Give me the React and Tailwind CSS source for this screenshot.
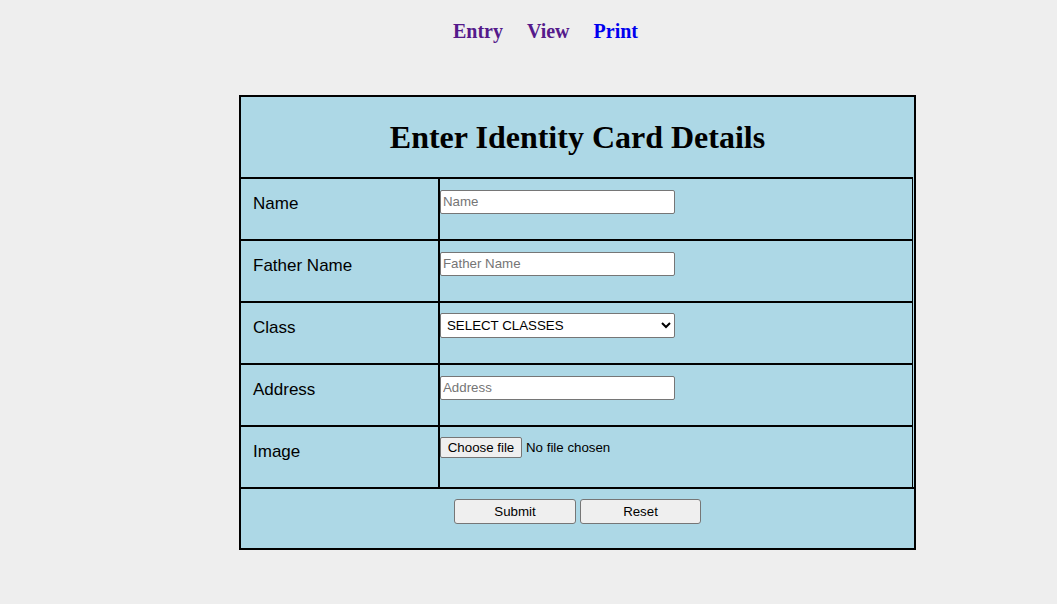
import { useState } from "react";

const ROWS = [
  { label: "Name", kind: "text", ph: "Name" },
  { label: "Father Name", kind: "text", ph: "Father Name" },
  { label: "Class", kind: "select" },
  { label: "Address", kind: "text", ph: "Address" },
  { label: "Image", kind: "file" },
];

function Field({ row }) {
  if (row.kind === "select") {
    return (
      <select className="h-[25px] w-[235px] rounded-[2px] border border-[#767676] bg-white pl-[2px] text-[13.3px] text-black">
        <option>SELECT CLASSES</option>
        <option>I</option>
        <option>II</option>
        <option>III</option>
      </select>
    );
  }
  if (row.kind === "file") {
    return (
      <div className="flex items-center gap-[4px] text-[13.3px] text-black">
        <button type="button" className="h-[21px] w-[82px] rounded-[2px] border border-[#767676] bg-[#efefef] text-[13.3px]">
          Choose file
        </button>
        <span>No file chosen</span>
      </div>
    );
  }
  return (
    <input
      type="text"
      placeholder={row.ph}
      className="h-[24px] w-[235px] rounded-[2px] border border-[#767676] bg-white px-[2px] text-[13.3px] text-black placeholder:text-[#757575]"
    />
  );
}

export default function App() {
  const [active] = useState("Entry");

  return (
    <div className="min-h-[604px] bg-[#eeeeee] pt-[20px] font-['Liberation_Sans',Arial,sans-serif]">
      {/* nav */}
      <nav className="flex justify-center gap-[24px] pl-[34px] font-['Liberation_Serif','Times_New_Roman',serif] text-[20px] font-bold leading-[23px]">
        <a href="#" className="text-[#551a8b]">Entry</a>
        <a href="#" className="text-[#551a8b]">View</a>
        <a href="#" className="text-[#0000ee]">Print</a>
      </nav>

      <form
        className="ml-[239px] mt-[52px] w-[677px] border-2 border-black bg-[#add8e6]"
        onSubmit={(e) => e.preventDefault()}
        data-active={active}
      >
        <div className="flex h-[80px] items-center justify-center">
          <h1 className="font-['Liberation_Serif','Times_New_Roman',serif] text-[32px] font-bold leading-none text-black">
            Enter Identity Card Details
          </h1>
        </div>

        {ROWS.map((row) => (
          <div key={row.label} className="mr-px flex h-[62px] border-t-2 border-r border-black">
            <div className="w-[199px] shrink-0 border-r-2 border-black pl-[12px] pt-[15px] text-[17px] leading-[20px] text-black">
              {row.label}
            </div>
            <div className="flex-1 pt-[10px]">
              <Field row={row} />
            </div>
          </div>
        ))}

        <div className="flex h-[61px] justify-center gap-[4px] border-t-2 border-black pt-[10px]">
          <button type="submit" className="h-[25px] w-[122px] rounded-[3px] border border-[#767676] bg-[#efefef] text-[13.3px] text-black">
            Submit
          </button>
          <button type="reset" className="h-[25px] w-[121px] rounded-[3px] border border-[#767676] bg-[#efefef] text-[13.3px] text-black">
            Reset
          </button>
        </div>
      </form>
    </div>
  );
}
